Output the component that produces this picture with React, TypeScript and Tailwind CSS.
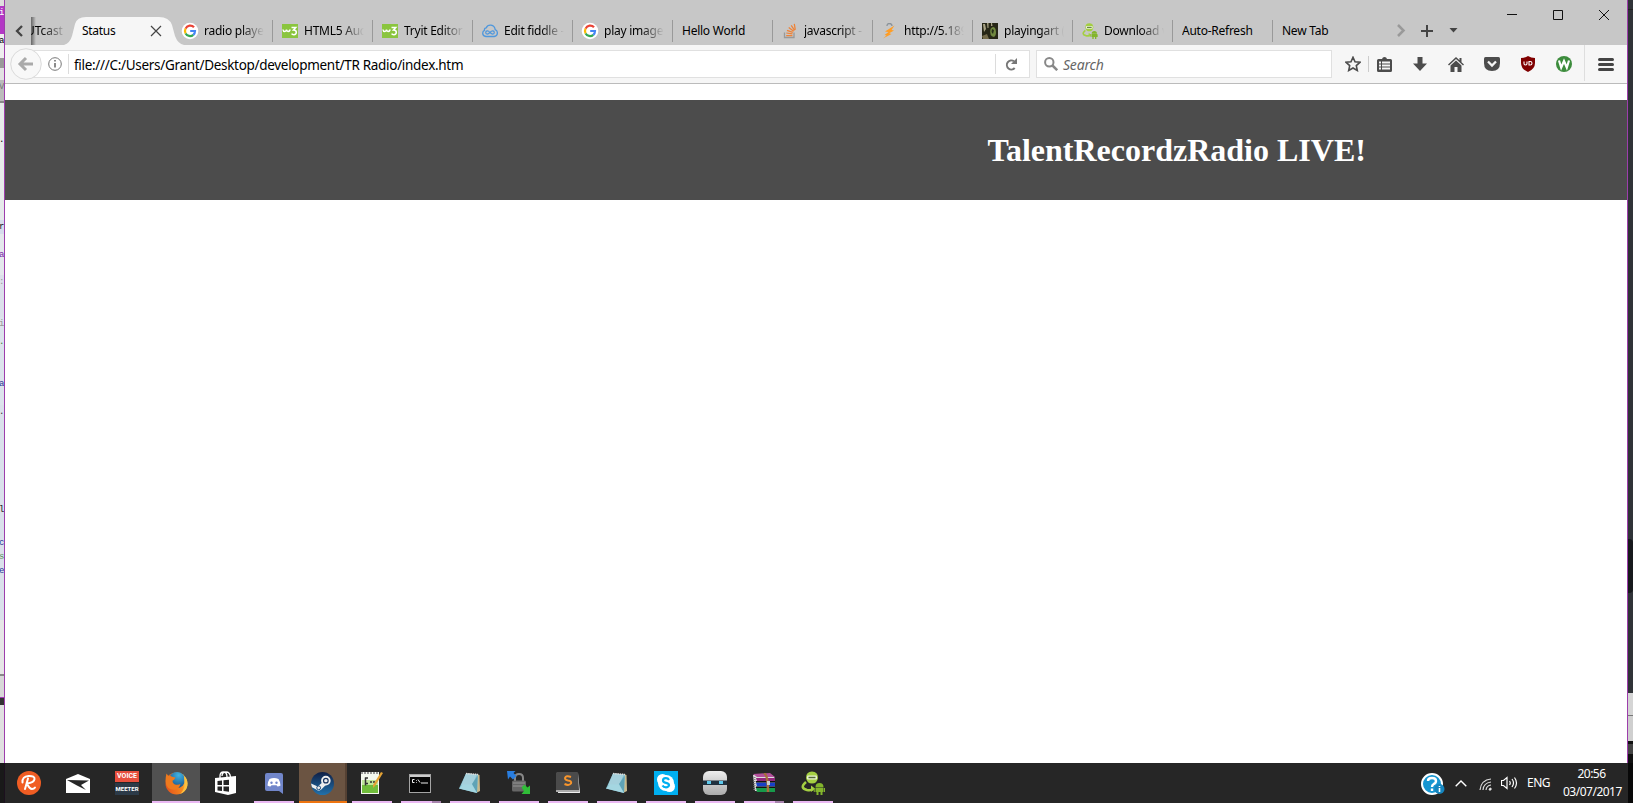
import React, { ReactNode } from "react";

const Google = () => (
  <svg width="18" height="18" viewBox="0 0 18 18" className="-mx-px shrink-0">
    <circle cx="9" cy="9" r="8.3" fill="#fff" />
    <g fill="none" strokeWidth="2.2">
      <path d="M13 5.3A5 5 0 0 0 4.6 6.6" stroke="#ea4335" />
      <path d="M4.6 6.6a5 5 0 0 0 0 4.8" stroke="#fbbc05" />
      <path d="M4.6 11.4A5 5 0 0 0 12.3 12.8" stroke="#34a853" />
      <path d="M9.2 9H14a5 5 0 0 1-1.7 3.8" stroke="#4285f4" />
    </g>
  </svg>
);
const W3 = () => (
  <svg width="16" height="14" viewBox="0 0 16 14" className="shrink-0">
    <rect width="16" height="14" fill="#8ac53e" />
    <path d="M1 5.500Q1.200 7.500 2.700 7.500T4.500 5.500Q4.800 7.500 6.200 7.500T8.200 5.500M9.500 3.500h4.300L11.500 6q2.800 0 2.800 2.300t-2.500 2.500q-1.500 0-2.200-1.100" fill="none" stroke="#fff" strokeWidth="1.500" />
  </svg>
);
const Fiddle = () => (
  <svg width="16" height="14" viewBox="0 0 16 14" fill="none" stroke="#4f97dc" className="shrink-0">
    <path d="M4 12.500Q.700 12 .700 9.200q0-2 1.800-2.800-.400-2.200 1.700-2.500Q5.500.800 9 1.200q3.800.700 4.200 4.500 2.200.900 2.200 3.300 0 3-3.200 3.500z" strokeWidth="1.3" />
    <path d="M8 8.500q-1.600-2-3-1.600-1.300.400-1.300 1.700 0 1.400 1.500 1.500Q6.500 10 8 8.500q1.500-1.800 3-1.600 1.300.400 1.300 1.700 0 1.400-1.500 1.500Q9.500 10 8 8.500z" strokeWidth="1.200" />
  </svg>
);
const Stack = () => (
  <svg width="16" height="16" viewBox="0 0 16 16" fill="none" className="shrink-0">
    <path d="M2.500 9.500v5h9.500v-5" stroke="#999" strokeWidth="1.3" />
    <path d="M4.200 12.500h6.200M4.300 10l6.200.900M5 7.300l5.800 2M6.700 4.600l5 3.600M9.200 2.300l3.400 5M12.300.800l1 6" stroke="#ef8236" strokeWidth="1.25" />
  </svg>
);
const Bolt = () => (
  <svg width="16" height="16" viewBox="0 0 16 16" className="shrink-0">
    <path d="M5 3q0-2.500 2.500-2.500T10 3" fill="none" stroke="#8a9299" strokeWidth="1.300" />
    <path d="M12.500 2.500 3 8.500l3.500.500L2.500 12l2 .500L1 15.500l8.500-4.500-2.300-.700L12 7.500 9.500 7z" fill="#ff9d24" />
  </svg>
);
const Art = () => (
  <svg width="16" height="16" viewBox="0 0 16 16" className="shrink-0">
    <rect width="16" height="16" fill="#272717" />
    <path d="M1 1h2l1 5-2 3zM5 0h1.500v5H5.500zM9 0h1l.500 3H9z" fill="#aaa486" />
    <path d="M8.500 6q3-4 5 0 1.500 6-1.500 8-5-1-3.500-8" fill="#71893f" />
    <path d="m10 6 2 1-1 4-1.500-2z" fill="#252c18" />
    <path d="M0 13l5-2 2 5H1z" fill="#756c4b" />
  </svg>
);
const Droid = ({ size = 16 }: { size?: number }) => (
  <svg width={size} height={size} viewBox="0 0 24 24" className="shrink-0">
    <path d="M5 7q0-6.500 6-6.500T17 7q-1 5.500-6 5.500T5 7z" fill="#a4cf42" />
    <rect x="6" y="4.500" width="10" height="4" rx="1" fill="#e8f3cf" />
    <path d="M7.500 6.500h7" stroke="#536a36" strokeWidth="1.500" />
    <path d="M5 11q-7 6 1 8 4 .800 6.500-1" fill="none" stroke="#a4cf42" strokeWidth="2.500" />
    <path d="m10 14.500 4 3-4 3.500z" fill="#a4cf42" />
    <path d="M14.500 16q0-4 4-4t4 4zM14.500 16.500h8V21h-8zM15.500 21h2v3h-2zM19.500 21h2v3h-2zM12.800 17h1v4h-1zM23 17h1v4h-1z" fill="#83b52c" />
  </svg>
);

const tabs: { label: string; icon?: ReactNode }[] = [
  { label: "radio player", icon: <Google /> },
  { label: "HTML5 Audio", icon: <W3 /> },
  { label: "Tryit Editor v", icon: <W3 /> },
  { label: "Edit fiddle - J", icon: <Fiddle /> },
  { label: "play image", icon: <Google /> },
  { label: "Hello World" },
  { label: "javascript - H", icon: <Stack /> },
  { label: "http://5.189.1", icon: <Bolt /> },
  { label: "playingart (2", icon: <Art /> },
  { label: "Download v", icon: <Droid /> },
  { label: "Auto-Refresh" },
  { label: "New Tab" },
];

function TabStrip() {
  return (
    <div className="flex h-[45px] bg-[#c7c7c7] pt-[17px] text-[12px] tracking-[-0.25px] text-black">
      <div className="flex w-[26px] items-center justify-center pl-[2px]">
        <svg width="8" height="12" viewBox="0 0 8 12"><path d="M7 1 2 6l5 5" fill="none" stroke="#444" strokeWidth="2.300" /></svg>
      </div>
      <div className="flex w-[41px] overflow-hidden bg-gradient-to-r from-[#666] to-transparent to-[5px] pt-[6px]">
        <span className="-ml-[5px] bg-gradient-to-r from-black from-30% to-[#aaa] bg-clip-text leading-4 tracking-[-0.050px] text-transparent">UTcast</span>
      </div>
      <div className="relative flex w-[100px] items-center pl-[10px]">
        <svg className="absolute -left-[8px] top-0" width="122" height="28" viewBox="0 0 122 28">
          <path d="M0 28Q6 26 8 19L11 7Q13 0 22 0H95Q105 0 108 8L111 19Q114 27 120 28Z" fill="#f6f6f6" />
        </svg>
        <span className="relative grow tracking-[-0.3px]">Status</span>
        <svg className="relative mr-[10px]" width="12" height="12" viewBox="0 0 12 12"><path d="m1 1 10 10M11 1 1 11" stroke="#444" strokeWidth="1.200" /></svg>
      </div>
      {tabs.map((t, i) => (
        <div key={i} className="relative flex w-[100px] items-center gap-[6px] pl-[10px]">
          {i > 0 && <i className="absolute left-0 top-[3px] h-[22px] w-px bg-[#999]" />}
          {t.icon}
          <span className={t.icon
            ? "w-[60px] shrink-0 overflow-hidden whitespace-nowrap [mask-image:linear-gradient(to_right,#000_62%,transparent_100%)]"
            : "w-[80px] overflow-hidden whitespace-nowrap"}>{t.label}</span>
        </div>
      ))}
      <div className="-mt-[17px] flex grow">
        <svg width="255" height="45" viewBox="1372 0 255 45" fill="none">
          <path d="m1398 25 5.500 5.500-5.500 5.500" stroke="#999" strokeWidth="2.500" />
          <path d="M1421 31h12M1427 25v12" stroke="#444" strokeWidth="2" />
          <path d="M1449.500 28h8l-4 4.500z" fill="#444" />
          <path d="M1507 14.500h10M1553.500 10.500h9v9h-9zM1599 10l10 10M1609 10l-10 10" stroke="#111" />
        </svg>
      </div>
    </div>
  );
}

const cell = "flex w-9 items-center justify-center";

function Toolbar() {
  return (
    <div className="flex h-[39px] border-b border-[#bbb] bg-[#f6f6f6]">
      <div className="relative mt-[5px] ml-[20px] flex h-[28px] w-[1005px] items-center border border-[#e0e0e0] bg-white">
        <svg className="absolute -left-[16px] -top-[3px]" width="32" height="32" viewBox="0 0 32 32">
          <circle cx="16" cy="16" r="15.300" fill="#f8f8f8" stroke="#dadada" />
          <path d="m16 10-6 6 6 6M10 16h13" fill="none" stroke="#aaa" strokeWidth="3" />
        </svg>
        <svg className="ml-[22px]" width="14" height="14" viewBox="0 0 14 14"><circle cx="7" cy="7" r="6.300" fill="none" stroke="#777" /><path d="M7 6v4.500M7 3v1.500" stroke="#666" strokeWidth="1.500" /></svg>
        <i className="ml-[6px] h-5 w-px bg-[#dcdcdc]" />
        <span className="ml-[5px] grow pt-[2px] text-[13.5px] leading-5 tracking-[-0.3px] text-black">file:///C:/Users/Grant/Desktop/development/TR Radio/index.htm</span>
        <i className="h-5 w-px bg-[#dcdcdc]" />
        <svg className="ml-[9px] mr-[11px]" width="13" height="13" viewBox="0 0 13 13"><path d="M9 3.300A4.500 4.500 0 1 0 9.700 10" fill="none" stroke="#777" strokeWidth="2" /><path d="M12 0v6H6z" fill="#777" /></svg>
      </div>
      <div className="mt-[5px] ml-[6px] flex h-[28px] w-[296px] items-center border border-[#e0e0e0] bg-white pl-[7px]">
        <svg width="14" height="14" viewBox="0 0 14 14" fill="none" stroke="#888"><circle cx="5.300" cy="5.300" r="4.200" strokeWidth="2" /><path d="m8.500 8.500 4.700 4.700" strokeWidth="2.500" /></svg>
        <span className="ml-[5px] text-[14px] italic tracking-[-0.2px] text-[#666]">Search</span>
      </div>
      <div className="ml-[5px] flex w-[31px] items-center justify-center">
        <svg width="16" height="16" viewBox="0 0 16 16"><path d="m8 1.300 2 4.500 4.900.500-3.600 3.300 1 4.900L8 12l-4.300 2.500 1-4.900L1.100 6.300 6 5.800z" fill="none" stroke="#4c4c4c" strokeWidth="1.600" /></svg>
      </div>
      <i className="mt-[11px] h-4 w-px bg-[#ccc]" />
      <div className="flex w-[33px] items-center justify-center pr-[3px]">
        <svg width="15" height="15" viewBox="0 0 15 15"><path d="M1.500 2H5q.500-2 2.500-2T10 2h3.500q1.500 0 1.500 1.500v10q0 1.500-1.500 1.500h-12Q0 15 0 13.500v-10Q0 2 1.500 2z" fill="#4c4c4c" /><path d="M2 5.500h2m1 0h8m-11 3h2m1 0h8m-11 3h2m1 0h8" stroke="#f6f6f6" strokeWidth="1.900" /></svg>
      </div>
      <div className={cell}><svg width="14" height="14" viewBox="0 0 14 14"><path d="M4.500 0h5v6.500H14L7 14 0 6.500h4.500z" fill="#4c4c4c" /></svg></div>
      <div className={cell}><svg width="16" height="15" viewBox="0 0 16 15"><path d="M8 0 0 7.500l1 1 7-6.400 7 6.400 1-1-2.500-2.300V1h-2v2.200z" fill="#4c4c4c" /><path d="m8 3.600 5.500 5V15H9.500v-5h-3v5h-4V8.600z" fill="#4c4c4c" /></svg></div>
      <div className={cell}><svg width="16" height="14" viewBox="0 0 16 14"><path d="M1.500 0h13Q16 0 16 1.500V6q0 8-8 8T0 6V1.500Q0 0 1.500 0z" fill="#4c4c4c" /><path d="m4 4.500 4 4 4-4" fill="none" stroke="#f6f6f6" strokeWidth="2.300" /></svg></div>
      <div className={cell}><svg width="14" height="16" viewBox="0 0 14 16"><path d="M7 0q3 2 7 2v5q0 6-7 9-7-3-7-9V2q4 0 7-2z" fill="#800000" /><path d="M3 5.500v2q0 1.500 1.500 1.500T6 7.500v-2M8 5.500h1.200q1.800 0 1.800 1.750T9.200 9H8z" fill="none" stroke="#fff" strokeWidth="1.100" /></svg></div>
      <div className={cell}><svg width="16" height="16" viewBox="0 0 16 16"><circle cx="8" cy="8" r="8" fill="#3c8c3c" /><path d="m3 4.500 2.200 7L8 5l2.800 6.500 2.200-7" fill="none" stroke="#fff" strokeWidth="2.200" /></svg></div>
      <i className="ml-[2px] h-[36px] w-px bg-[#dedede]" />
      <div className="flex grow items-center justify-center"><svg width="16" height="13" viewBox="0 0 16 13"><path d="M1.500 1.500h13m-13 5h13m-13 5h13" stroke="#444" strokeWidth="3" strokeLinecap="round" /></svg></div>
    </div>
  );
}

const Notepad = () => (
  <svg width="24" height="24" viewBox="0 0 24 24">
    <path d="m19 3 2.500 1 .500 16-4 2z" fill="#c9b98c" />
    <path d="M8 2.500 20 3.500 19 22 1 17.500z" fill="#7fbdcd" />
    <path d="M8 2.500 19 3.500 14 14l-11 .500z" fill="#a5d0dc" />
    <path d="M14 13 19.500 5 19 22z" fill="#5fa3b6" />
    <path d="m1 17.500 4-4 9 0 5 8.500z" fill="#a4d6e1" />
    <path d="M8 2.500 20 3.500" stroke="#ddd" strokeWidth="1.500" strokeDasharray="1.500 .700" />
  </svg>
);

type Task = { icon: ReactNode; line?: "full" | "on" | "split" | "steam"; bg?: string };
const tasks: Task[] = [
  { icon: <svg width="24" height="24" viewBox="0 0 24 24"><circle cx="12" cy="12" r="12" fill="#f05d23" /><path d="M5.500 11.500Q5 5.500 11.500 5q6.500-.300 6 3.200T10 12.500q2.500 5.500 5 5.500 2 0 3-1.500M11 7.500 8 18" fill="none" stroke="#fff" strokeWidth="2" strokeLinecap="round" /></svg> },
  { icon: <svg width="24" height="19" viewBox="0 0 24 19"><path d="M0 5 12 0l12 5v14H0z" fill="#fff" /><path d="m1 6 22 .500-8 4.500 5 5-9-4.500z" fill="#262626" /></svg> },
  { icon: <div className="flex h-6 w-6 flex-col text-center text-[7px] font-bold leading-[11px] text-white"><span className="h-[11px] bg-[#e84f3d] font-['Roboto']">VOICE</span><span className="mt-[1px] flex h-3 justify-center bg-[#2c3a48] font-['Roboto'] text-[6px] leading-3">MEETER</span></div> },
  { bg: "bg-[#515151]", line: "full", icon: (
    <svg width="24" height="24" viewBox="0 0 24 24">
      <defs>
        <linearGradient id="fox" x1="0" x2="1" y1=".6" y2=".4"><stop stopColor="#e4541c" /><stop offset=".7" stopColor="#f3871f" /><stop offset="1" stopColor="#fcd04e" /></linearGradient>
        <radialGradient id="globe" cx=".6" cy=".2" r=".9"><stop stopColor="#41b3e2" /><stop offset="1" stopColor="#12457f" /></radialGradient>
      </defs>
      <circle cx="12.500" cy="12.500" r="11" fill="url(#fox)" />
      <circle cx="13" cy="9" r="8" fill="url(#globe)" />
      <path d="M2.500 2.500q1 2.500 4 2.500 2 1.300 5 1.500-1 2.300-3 3.300 0 3.200 3.500 4 3.500.200 4.500-1-1 5-5.500 6Q2 19 1.500 10q0-4 1-7.500z" fill="#ee7a1e" />
      <path d="M20 5q4 4 3.300 10-1.300 6-7.300 8 5-5 4.500-10z" fill="#fcc13f" />
    </svg>
  ) },
  { icon: <svg width="21" height="24" viewBox="0 0 21 24"><path d="M5 8V5q0-4 3.500-4Q12 1 12 6m-5-1q0-4 4-4t4.500 5" fill="none" stroke="#fff" strokeWidth="1.300" /><path d="m0 7 21-2v17l-8 2-13-3z" fill="#fff" /><path d="m2.500 10 4.500-.500V14H2.500zM8.500 9.300l5.500-.500V14H8.500zM2.500 15.500H7V20l-4.500-.500zM8.500 15.500H14v5.200L8.500 20z" fill="#262626" /></svg> },
  { line: "on", icon: <svg width="18" height="21" viewBox="0 0 18 21"><path d="M2 0h14q2 0 2 2v19l-4-3H2q-2 0-2-2V2q0-2 2-2z" fill="#7186ca" /><path d="M4.500 6q4.500-1.800 9 0 2 3 2 6.500-1.500 1-3 1l-1-1.300H6.500l-1 1.300q-1.500 0-3-1 0-3.500 2-6.500z" fill="#fff" /><circle cx="6.500" cy="9.800" r="1.200" fill="#7186ca" /><circle cx="11.500" cy="9.800" r="1.200" fill="#7186ca" /></svg> },
  { bg: "bg-[#6b5442] border-r-2 border-[#554133]", line: "steam", icon: <svg width="23" height="23" viewBox="0 0 24 24" className="ml-px"><defs><linearGradient id="steam" x2="0" y2="1"><stop stopColor="#101f45" /><stop offset="1" stopColor="#2171ab" /></linearGradient></defs><circle cx="12" cy="12" r="12" fill="url(#steam)" /><path d="m0 12 7 3 6-5 3 3-5 5q-3 3-6 0L1 16z" fill="#eee" /><circle cx="15.500" cy="9" r="4" fill="#16315d" stroke="#eee" strokeWidth="2" /><circle cx="15.500" cy="9" r="1.800" fill="#eee" /><circle cx="8" cy="16.500" r="2" fill="none" stroke="#194775" /></svg> },
  { line: "on", icon: <svg width="24" height="24" viewBox="0 0 24 24" className="-ml-[3px]"><path d="M2 1h18v22H2z" fill="#f4f8ef" /><path d="M3 11h16v11H3z" fill="#70bd3b" /><path d="M3 9h16v5H3z" fill="#bfe69a" /><path d="M2 2h18" stroke="#999" strokeDasharray="2 1" strokeWidth="2" /><path d="M6.500 6.500v8M6 7h3m2 4h2m1 0h2M6 12.500h3" stroke="#333" strokeWidth="1.500" /><path d="m22 1 2 1-8 13-2 2v-3z" fill="#e4a234" /></svg> },
  { line: "split", icon: <svg width="22" height="19" viewBox="0 0 22 19" className="-ml-[3px]"><rect x=".500" y=".500" width="21" height="18" fill="#050505" stroke="#a4a4a4" /><path d="M1 2h20" stroke="#ccc" strokeWidth="2" /><path d="M5.500 5.500H3.500v3h2M7.500 6v.700m0 1.300v.700M9 5.500l2 3m1 .500h7" stroke="#eee" fill="none" /></svg> },
  { line: "on", icon: <Notepad /> },
  { line: "on", icon: <svg width="24" height="24" viewBox="0 0 24 24"><path d="M8 11V7q0-4 4-4t4 4v4" fill="none" stroke="#888" strokeWidth="2" /><rect x="5" y="9.500" width="14" height="11" rx="1.500" fill="#666" /><path d="M6 12h12M6 15h12" stroke="#959595" /><path d="M0 0h8.500L6.500 2l3 3-3.500 3.500-3-3-2 3z" fill="#297ee0" /><path d="m14.500 16.500 3-3 3 3 2.500-2V23h-8.500l2.500-3z" fill="#30bd38" /></svg> },
  { line: "on", icon: <svg width="24" height="22" viewBox="0 0 24 22"><path d="M3 1h19l2 20H2z" fill="#eee" /><path d="M1 0h20q1 0 1 1l1 17H0V1z" fill="#4b4b4b" /><path d="M0 18h23v2H0z" fill="#aaa" /><path d="M15 5q-5-2-6 1 0 2 3 2.500 4 .500 3 3-2 2.500-6.500.500" fill="none" stroke="#f8952c" strokeWidth="2" /></svg> },
  { line: "on", icon: <Notepad /> },
  { line: "on", icon: <svg width="24" height="24" viewBox="0 0 24 24"><rect width="24" height="24" fill="#00aff0" /><circle cx="8.500" cy="8.500" r="5.500" fill="#fff" /><circle cx="15.500" cy="15.500" r="5.500" fill="#fff" /><circle cx="12" cy="12" r="8" fill="#fff" /><path d="M15 9q-1-2-3.500-1.800T9 9.500q0 1.800 3 2.300t3 2.500q-.500 2-3 2T8.500 14.500" fill="none" stroke="#00aff0" strokeWidth="2.200" /></svg> },
  { line: "on", icon: <svg width="24" height="24" viewBox="0 0 24 24"><defs><linearGradient id="bot" x2="0" y2="1"><stop stopColor="#eee" /><stop offset="1" stopColor="#aaa" /></linearGradient></defs><rect width="24" height="24" rx="6" fill="url(#bot)" /><path d="M0 9.500h24v4.500H0z" fill="#20313f" /><path d="M4 10h4v3H4zm12 0h4v3h-4z" fill="#5cc9ec" /></svg> },
  { line: "split", icon: <svg width="24" height="20" viewBox="0 0 24 20"><path d="m1 2 17-1 5 4v14L3 18z" fill="#ddd" /><path d="m1 1 17-1 5 4H5z" fill="#b3509b" /><path d="M4 5h19v3H5z" fill="#91277a" /><path d="M4 9.500h19v4H5z" fill="#183fc8" /><path d="M4 15h19v4H5z" fill="#179a4a" /><path d="M4 8.800h19M4 14.200h19" stroke="#111" strokeWidth="1.500" /><path d="M12 0q4 2 4 19" fill="none" stroke="#a5703a" strokeWidth="2.500" /><path d="M15 8h3v4h-3z" fill="#ccc" /><path d="M2.500 4v14" stroke="#888" strokeWidth="2" strokeDasharray="1 1" /></svg> },
  { line: "on", icon: <Droid size={24} /> },
];

function Taskbar() {
  return (
    <div className="flex h-10 w-full bg-[#262626] text-[12px] text-white">
      <div className="w-[5px] border-r border-[#1c101e] bg-[#191919]" />
      <div className="flex gap-px">
        {tasks.map((t, i) => (
          <div key={i} className={`relative flex h-10 w-12 items-center justify-center ${t.bg ?? ""}`}>
            {t.icon}
            {t.line === "full" && <i className="absolute bottom-0 left-0 h-[2px] w-12 bg-[#eab8f3]" />}
            {t.line === "steam" && <i className="absolute bottom-0 left-0 h-[2px] w-12 bg-[#ee7410]" />}
            {t.line === "on" && <i className="absolute bottom-0 left-1 h-[2px] w-10 bg-[#eab8f3]" />}
            {t.line === "split" && <i className="absolute bottom-0 left-1 h-[2px] w-10 border-r-[9px] border-[#a783ad] bg-[#eab8f3]" />}
          </div>
        ))}
      </div>
      <div className="ml-auto flex items-center">
        <svg width="24" height="24" viewBox="0 0 24 24" className="mt-[3px]"><circle cx="11" cy="11" r="10" fill="#1696d2" stroke="#fff" strokeWidth="2" /><path d="M7 8q0-3 4-3t4 3q0 2-2.500 3.200Q11 12 11 14m0 1.500V18" fill="none" stroke="#fff" strokeWidth="2.400" /><circle cx="18.500" cy="16" r="5" fill="#1585be" /><path d="M18.500 15v4m0-6v1" stroke="#fff" strokeWidth="1.600" /></svg>
        <svg width="12" height="7" viewBox="0 0 12 7" className="ml-[10px]"><path d="m.700 6.300 5.300-5.300 5.300 5.300" fill="none" stroke="#fff" strokeWidth="1.400" /></svg>
        <svg width="13" height="13" viewBox="0 0 13 13" className="ml-[12px] mt-[3px]" fill="none" stroke="#ddd"><path d="M1 12Q2 2 12 1M4 12q.500-7 8-8M7 12q.500-4.500 5-5" strokeWidth="1.200" /><path d="M10 12q0-2 2-2v2z" fill="#fff" /></svg>
        <svg width="17" height="14" viewBox="0 0 17 14" className="ml-[9px]" fill="none" stroke="#fff"><path d="M.500 4.500h2l3.500-3v11l-3.500-3h-2zM8.500 5q1.500 2 0 4M11 3q3 4 0 8M13.500 1.500q4 5.500 0 11" strokeWidth="1.200" /></svg>
        <span className="ml-[9px] w-[23px] whitespace-nowrap tracking-[-0.5px]">ENG</span>
        <div className="ml-[13px] mr-[8px] w-[57px] whitespace-nowrap text-center leading-[18px] tracking-[-0.5px]"><div>20:56</div><div>03/07/2017</div></div>
      </div>
      <div className="w-[5px] bg-[#080808]" />
    </div>
  );
}

const edge: [string, string][] = [
  ["h-[6px] bg-[#ddd]", ""], ["h-[28px] bg-[#b338c5] text-white", "i"], ["h-[24px] bg-[#eee] text-black", "a"],
  ["h-[10px] bg-[#999]", ""], ["h-[12px] bg-[#e2e2e2]", ""], ["h-[21px] bg-[#bbb] text-[#777]", "V"], ["h-[2px] bg-[#888]", ""],
  ["h-[30px] bg-[#e6eaea]", ""], ["h-[87px] bg-[#e6eaea] text-black", ".c"], ["h-[14px] bg-[#d6dcec] text-[#222]", "r="],
  ["h-[14px] bg-[#e4e8ec]", ""], ["h-[27px] bg-[#e4e8ec] text-[#7a24a8]", "a]"], ["h-[42px] bg-[#dce0eb] text-[#999]", "::"],
  ["h-[18px] bg-[#dce4ec] text-[#999]", "is"], ["h-[42px] bg-[#dce4ec] text-[#398235]", ".c"], ["h-[28px] bg-[#dce4ec] text-[#2b3695]", "au"],
  ["h-[98px] bg-[#dae1eb] text-[#333]", ".y"], ["h-[33px] bg-[#dae1eb] text-[#222]", "ly"], ["h-[14px] bg-[#dae1eb] text-[#2b3695]", "c:"],
  ["h-[14px] bg-[#dae1eb] text-[#59935b]", "so"], ["h-[56px] bg-[#dae1eb] text-[#2b3695]", "et"], ["h-[54px] bg-[#e6e6e6]", ""],
  ["h-[2px] bg-[#888]", ""], ["h-[21px] bg-[#d8d8d8]", ""], ["h-[8px] border-t border-[#a43cb6] bg-[#333]", ""], ["h-[58px] bg-[#e0e0e0]", ""],
];

export default function App() {
  return (
    <div className="flex h-[803px] w-[1633px] flex-col overflow-hidden bg-white font-['Noto_Sans',sans-serif]">
      <div className="flex h-[763px]">
        <div className="w-[4px] overflow-hidden font-['Liberation_Mono',monospace] text-[9px] leading-[14px]">
          {edge.map(([c, s], i) => (
            <div key={i} className={`overflow-hidden ${c}`}><span className="-ml-px">{s}</span></div>
          ))}
        </div>
        <div className="flex w-[1624px] flex-col border-x border-[#9d3eac] bg-white">
          <TabStrip />
          <Toolbar />
          <header className="mt-4 flex h-[100px] items-center bg-[#4c4c4c] pl-[982.5px]">
            <h1 className="whitespace-nowrap font-['Liberation_Serif',serif] text-[32px] font-bold text-white">TalentRecordzRadio LIVE!</h1>
          </header>
        </div>
        <div className="flex w-[5px] flex-col bg-[#303338]">
          <i className="h-[10px] border-b border-[#222]" />
          <i className="mt-[529px] h-[54px] rounded-r bg-[#17191c]" />
          <i className="mt-[100px] h-[23px] border-b border-[#777] bg-[#d5d5d5]" />
          <i className="h-[25px] bg-[#cfcfcf]" />
          <i className="h-[3px] bg-[#111]" /><i className="h-[10px] bg-[#444]" /><i className="grow bg-[#111]" />
        </div>
      </div>
      <Taskbar />
    </div>
  );
}
